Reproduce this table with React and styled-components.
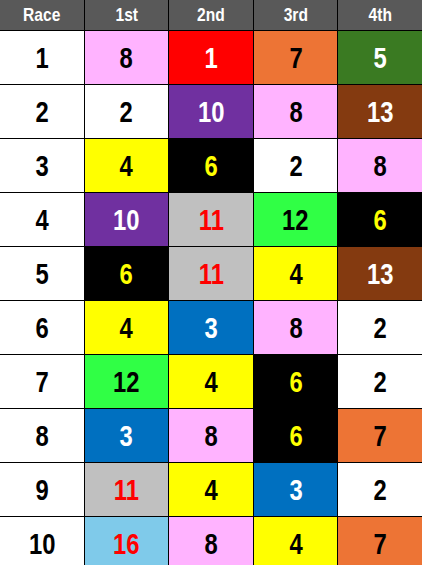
import React from "react";
import styled, { createGlobalStyle } from "styled-components";

const GlobalStyle = createGlobalStyle`
  html, body {
    margin: 0;
    padding: 0;
    background: #fff;
  }
`;

const palette = {
  pink: { bg: "#ffb3ff", fg: "#000" },
  red: { bg: "#ff0000", fg: "#fff" },
  orange: { bg: "#ed7435", fg: "#000" },
  green: { bg: "#3a7a22", fg: "#fff" },
  white: { bg: "#ffffff", fg: "#000" },
  purple: { bg: "#7030a0", fg: "#fff" },
  brown: { bg: "#843a10", fg: "#fff" },
  yellow: { bg: "#ffff00", fg: "#000" },
  black: { bg: "#000000", fg: "#ffff00" },
  gray: { bg: "#c0c0c0", fg: "#ff0000" },
  lime: { bg: "#30ff45", fg: "#000" },
  blue: { bg: "#0070c0", fg: "#fff" },
  sky: { bg: "#7fcaea", fg: "#ff0000" },
};

const colorOf = {
  1: "red",
  2: "white",
  3: "blue",
  4: "yellow",
  5: "green",
  6: "black",
  7: "orange",
  8: "pink",
  10: "purple",
  11: "gray",
  12: "lime",
  13: "brown",
  16: "sky",
};

const races = [
  [8, 1, 7, 5],
  [2, 10, 8, 13],
  [4, 6, 2, 8],
  [10, 11, 12, 6],
  [6, 11, 4, 13],
  [4, 3, 8, 2],
  [12, 4, 6, 2],
  [3, 8, 6, 7],
  [11, 4, 3, 2],
  [16, 8, 4, 7],
];

const headers = ["Race", "1st", "2nd", "3rd", "4th"];

const Grid = styled.div`
  display: grid;
  grid-template-columns: repeat(5, 1fr);
  grid-template-rows: 30px;
  grid-auto-rows: 53px;
  gap: 1px;
  background: #000;
  width: 422px;
  height: 565px;
  overflow: hidden;
  font-family: "Liberation Sans", Arial, sans-serif;
  font-weight: bold;
`;

const HeadCell = styled.div`
  background: #595959;
  color: #fff;
  font-size: 19px;
  display: flex;
  align-items: center;
  justify-content: center;
`;

const Cell = styled.div`
  background: ${(p) => p.$bg};
  color: ${(p) => p.$fg};
  font-size: 29px;
  display: flex;
  align-items: center;
  justify-content: center;
  padding-top: 1px;
`;

// Arial Narrow look: squeeze regular bold horizontally
const Narrow = styled.span`
  display: inline-block;
  transform: scaleX(0.82);
`;

export default function App() {
  return (
    <>
      <GlobalStyle />
      <Grid>
        {headers.map((h) => (
          <HeadCell key={h}>
            <Narrow>{h}</Narrow>
          </HeadCell>
        ))}
        {races.map((row, i) => (
          <React.Fragment key={i}>
            <Cell $bg="#fff" $fg="#000">
              <Narrow>{i + 1}</Narrow>
            </Cell>
            {row.map((n, j) => {
              const c = palette[colorOf[n]];
              return (
                <Cell key={j} $bg={c.bg} $fg={c.fg}>
                  <Narrow>{n}</Narrow>
                </Cell>
              );
            })}
          </React.Fragment>
        ))}
      </Grid>
    </>
  );
}
